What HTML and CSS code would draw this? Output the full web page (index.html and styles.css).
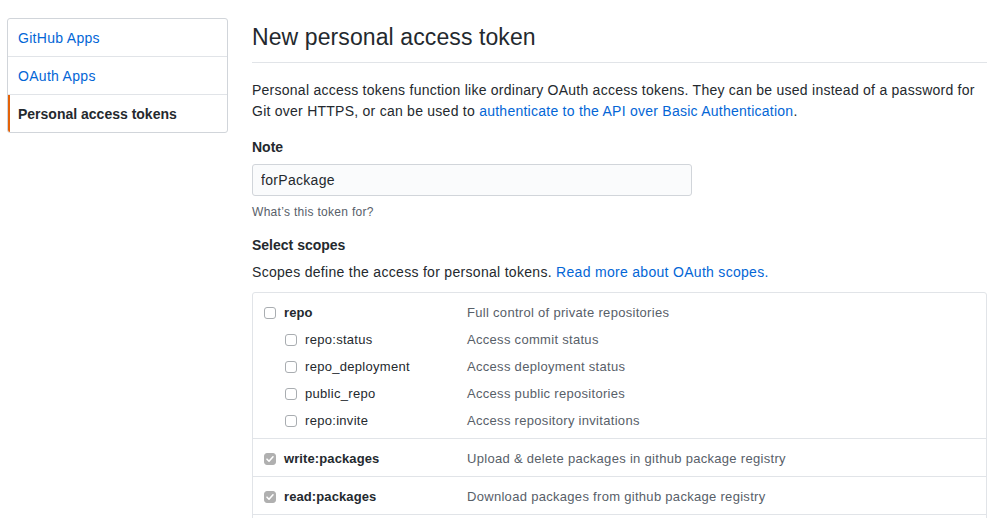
FILE: index.html
```html
<!DOCTYPE html>
<html>
<head>
<meta charset="utf-8">
<link rel="stylesheet" href="styles.css">
</head>
<body>
<div class="page">
  <nav class="menu">
    <a class="menu-item" href="#">GitHub Apps</a>
    <a class="menu-item" href="#">OAuth Apps</a>
    <a class="menu-item selected" href="#">Personal access tokens</a>
  </nav>
  <main class="main">
    <div class="subhead">
      <h2 class="subhead-title">New personal access token</h2>
    </div>
    <p class="intro">Personal access tokens function like ordinary OAuth access tokens. They can be used instead of a password for Git over HTTPS, or can be used to <a href="#">authenticate to the API over Basic Authentication</a>.</p>
    <div class="form-group">
      <label class="form-label">Note</label>
      <input class="form-control" type="text" value="forPackage">
      <p class="note">What’s this token for?</p>
    </div>
    <div class="form-group scopes-head">
      <label class="form-label">Select scopes</label>
      <p class="scopes-desc">Scopes define the access for personal tokens. <a href="#">Read more about OAuth scopes.</a></p>
    </div>
    <div class="scopes">
      <div class="scope-group">
        <div class="scope-row">
          <div class="scope-name top"><span class="cb"></span><span>repo</span></div>
          <div class="scope-desc">Full control of private repositories</div>
        </div>
        <div class="scope-row">
          <div class="scope-name sub"><span class="cb"></span><span>repo:status</span></div>
          <div class="scope-desc">Access commit status</div>
        </div>
        <div class="scope-row">
          <div class="scope-name sub"><span class="cb"></span><span>repo_deployment</span></div>
          <div class="scope-desc">Access deployment status</div>
        </div>
        <div class="scope-row">
          <div class="scope-name sub"><span class="cb"></span><span>public_repo</span></div>
          <div class="scope-desc">Access public repositories</div>
        </div>
        <div class="scope-row">
          <div class="scope-name sub"><span class="cb"></span><span>repo:invite</span></div>
          <div class="scope-desc">Access repository invitations</div>
        </div>
      </div>
      <div class="scope-group">
        <div class="scope-row">
          <div class="scope-name top"><span class="cb checked"><svg viewBox="0 0 12 12" width="12" height="12"><path d="M3 6.2l2 2 4-4.4" fill="none" stroke="#fff" stroke-width="1.6" stroke-linecap="round" stroke-linejoin="round"/></svg></span><span>write:packages</span></div>
          <div class="scope-desc">Upload &amp; delete packages in github package registry</div>
        </div>
      </div>
      <div class="scope-group">
        <div class="scope-row">
          <div class="scope-name top"><span class="cb checked"><svg viewBox="0 0 12 12" width="12" height="12"><path d="M3 6.2l2 2 4-4.4" fill="none" stroke="#fff" stroke-width="1.6" stroke-linecap="round" stroke-linejoin="round"/></svg></span><span>read:packages</span></div>
          <div class="scope-desc">Download packages from github package registry</div>
        </div>
      </div>
      <div class="scope-group">
        <div class="scope-row"></div>
      </div>
    </div>
  </main>
</div>
</body>
</html>
```
FILE: styles.css
```css
* { box-sizing: border-box; }
html, body { margin: 0; padding: 0; background: #fff; }
body {
  font-family: "Liberation Sans", Arial, sans-serif;
  font-size: 14px;
  line-height: 1.5;
  color: #24292e;
  letter-spacing: 0.3px;
  overflow: hidden;
}
a { color: #0366d6; text-decoration: none; }
.page {
  display: flex;
  align-items: flex-start;
  padding: 18px 18px 0 7px;
  gap: 24px;
}
.menu {
  width: 221px;
  flex: none;
  border: 1px solid #d1d5da;
  border-radius: 3px;
  display: flex;
  flex-direction: column;
}
.menu-item {
  display: block;
  padding: 9px 10px 7px;
  line-height: 21px;
  border-bottom: 1px solid #e1e4e8;
  color: #0366d6;
}
.menu-item:last-child { border-bottom: 0; }
.menu-item.selected {
  color: #24292e;
  font-weight: 700;
  letter-spacing: 0;
  border-left: 2px solid #e36209;
  padding-left: 8px;
  border-radius: 0 0 0 2px;
}
.main { flex: 1; min-width: 0; }
.subhead {
  border-bottom: 1px solid #e1e4e8;
  padding-bottom: 8px;
  margin-bottom: 17px;
  padding-top: 3px;
}
.subhead-title {
  margin: 0;
  font-size: 23px;
  font-weight: 400;
  letter-spacing: 0.1px;
  line-height: 33px;
}
.intro { margin: 0 0 15px; line-height: 21px; letter-spacing: 0.25px; }
.form-group { display: flex; flex-direction: column; }
.form-label { font-weight: 700; letter-spacing: 0; line-height: 21px; margin-bottom: 6px; }
.form-control {
  width: 440px;
  height: 32px;
  padding: 6px 8px;
  font: inherit;
  font-size: 14px;
  letter-spacing: 0.3px;
  color: #24292e;
  background: #fafbfc;
  border: 1px solid #d1d5da;
  border-radius: 3px;
  outline: none;
}
.note { margin: 6px 0 0; font-size: 12px; color: #586069; line-height: 20px; }
.scopes-head { margin-top: 13px; }
.scopes-head .form-label { margin-bottom: 6px; }
.scopes-desc { margin: 0 0 9px; line-height: 21px; }
.scopes {
  border: 1px solid #e1e4e8;
  border-radius: 3px;
}
.scope-group {
  padding: 6px 0 4px;
  border-bottom: 1px solid #e1e4e8;
}
.scope-row {
  display: grid;
  grid-template-columns: 203px 1fr;
  height: 27px;
  align-items: center;
  padding-left: 11px;
  font-size: 13px;
}
.scope-name { display: flex; align-items: center; gap: 8px; }
.scope-name.top { font-weight: 700; letter-spacing: 0.1px; }
.scope-name.sub { padding-left: 21px; }
.scope-desc { color: #586069; }
.cb {
  width: 12px;
  height: 12px;
  border: 1px solid #a9adb1;
  border-radius: 3px;
  background: #fff;
  flex: none;
  display: inline-flex;
}
.cb.checked {
  background: #b0b0b0;
  border-color: #b0b0b0;
}
.cb svg { margin: -1px; }
```
